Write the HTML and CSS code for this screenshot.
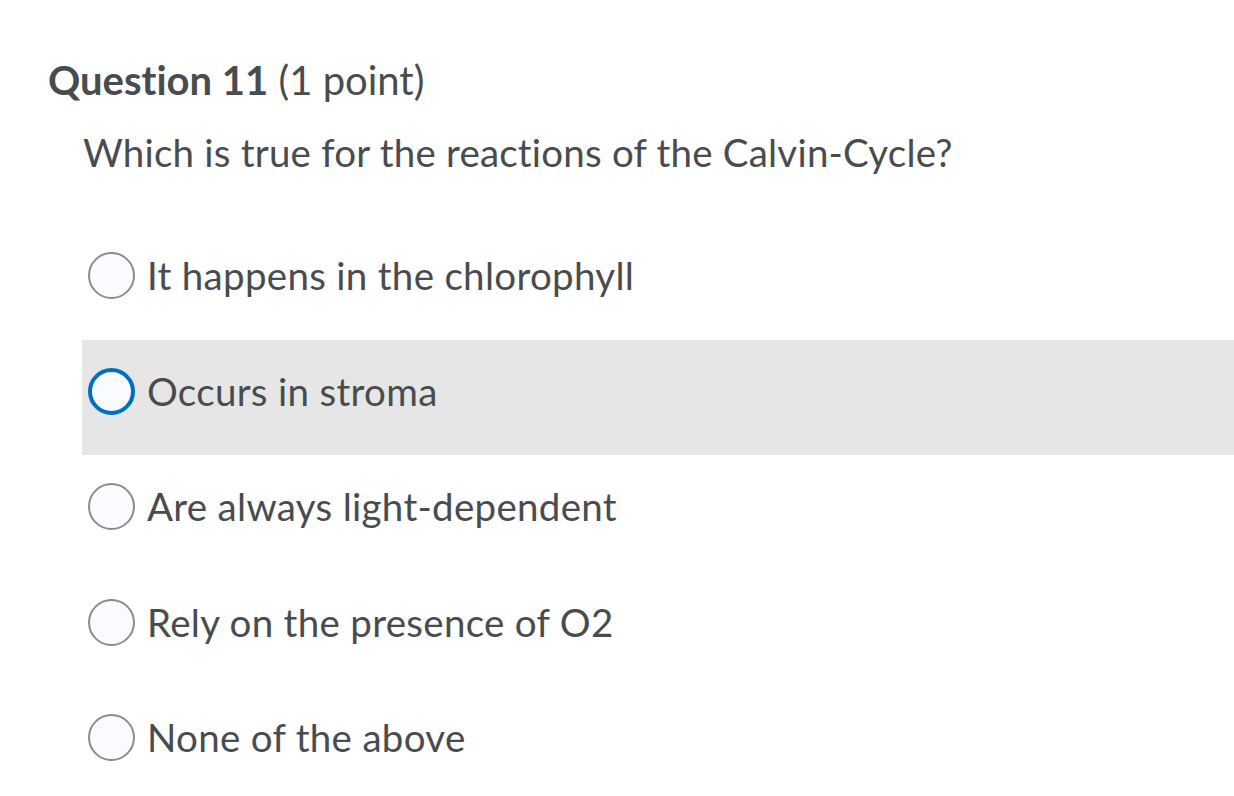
FILE: index.html
```html
<!DOCTYPE html>
<html>
<head>
<meta charset="utf-8">
<link rel="stylesheet" href="styles.css">
</head>
<body>
<div class="page">
  <h2 class="q-title"><strong>Question 11</strong> (1 point)</h2>
  <p class="q-text">Which is true for the reactions of the Calvin-Cycle?</p>
  <div class="options">
    <label class="opt"><span class="radio"></span><span class="opt-text">It happens in the chlorophyll</span></label>
    <label class="opt hover"><span class="radio focus"></span><span class="opt-text">Occurs in stroma</span></label>
    <label class="opt"><span class="radio"></span><span class="opt-text">Are always light-dependent</span></label>
    <label class="opt"><span class="radio"></span><span class="opt-text">Rely on the presence of O2</span></label>
    <label class="opt"><span class="radio"></span><span class="opt-text">None of the above</span></label>
  </div>
</div>
</body>
</html>
```
FILE: styles.css
```css
html, body {
  margin: 0;
  padding: 0;
  background: #ffffff;
}
body {
  font-family: Lato, "Open Sans", sans-serif;
  color: #494c4e;
  font-variant-ligatures: none;
  font-feature-settings: "liga" 0, "clig" 0;
}
.page {
  padding: 56px 0 0 48px;
}
.q-title {
  margin: 0;
  font-size: 40px;
  font-weight: 400;
  line-height: 48px;
}
.q-title strong {
  font-weight: 700;
}
.q-text {
  margin: 24px 0 0 35px;
  font-size: 38.5px;
  letter-spacing: 0.2px;
  line-height: 48px;
}
.options {
  margin: 48px 0 0 34px;
  display: flex;
  flex-direction: column;
}
.opt {
  box-sizing: border-box;
  display: flex;
  align-items: flex-start;
  gap: 12px;
  height: 115.5px;
  padding: 28px 0 0 6px;
  font-size: 38.5px;
  letter-spacing: 0.3px;
}
.opt-text {
  line-height: 47px;
}
.opt.hover {
  background: #e6e6e6;
}
.radio {
  box-sizing: border-box;
  width: 47px;
  height: 47px;
  border-radius: 50%;
  border: 2px solid #8a8c8e;
  background: #f9fbff;
  flex: none;
}
.radio.focus {
  border: 4px solid #006fbf;
}
```
